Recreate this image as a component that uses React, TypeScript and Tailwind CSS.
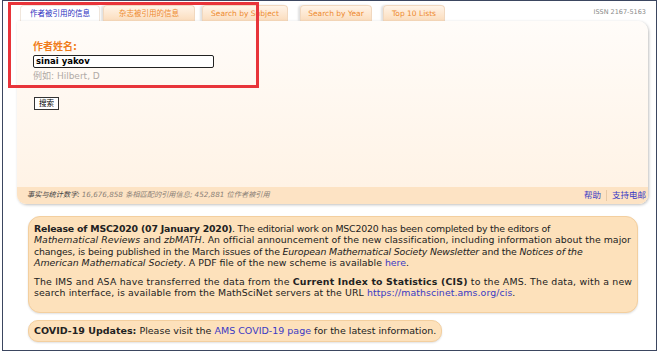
import React from 'react';

const tabs = [
  { label: '作者被引用的信息', w: 'w-[80px]', ml: 'ml-0', active: true },
  { label: '杂志被引用的信息', w: 'w-[92px]', ml: 'ml-[3px]', active: false },
  { label: 'Search by Subject', w: 'w-[86px]', ml: 'ml-[7px]', active: false },
  { label: 'Search by Year', w: 'w-[72px]', ml: 'ml-[12px]', active: false },
  { label: 'Top 10 Lists', w: 'w-[62px]', ml: 'ml-[11px]', active: false },
];

export default function App() {
  return (
    <div className="relative w-[659px] h-[353px] bg-white overflow-hidden font-['DejaVu_Sans','Noto_Sans_CJK_SC',sans-serif]">
      <div className="ml-[2px] w-[655px] h-[351px] border border-[#3b4660] flex flex-col">
        {/* Tabs */}
        <div className="h-[20px] flex items-end pl-[17px] pr-[10px]">
          {tabs.map((t) => (
            <div
              key={t.label}
              className={`${t.w} ${t.ml} h-[16px] rounded-t-[4px] flex items-center justify-center text-[7.5px] whitespace-nowrap ${
                t.active
                  ? 'bg-white text-[#2a2fc0] border border-b-0 border-[#f0e6dc]'
                  : 'bg-gradient-to-b from-[#fff4e8] to-[#fbdcbc] text-[#ee8a2e] border border-b-0 border-[#f1d8bf] shadow-[-2px_0_2px_rgba(0,0,0,0.12)]'
              }`}
            >
              {t.label}
            </div>
          ))}
          <div className="ml-auto self-start mt-[7px] text-[6.5px] text-[#8a8a8a]">ISSN 2167-5163</div>
        </div>

        {/* Main panel */}
        <div className="ml-[14px] w-[631px] h-[183px] rounded-tr-[10px] rounded-b-[9px] bg-gradient-to-b from-[#fffcf9] to-[#fff2e4] shadow-[1px_1px_3px_rgba(0,0,0,0.25)] flex flex-col overflow-hidden">
          <div className="pl-[16px] pt-[20px]">
            <div className="text-[10px] leading-[12px] font-semibold text-[#f07d1c]">作者姓名:</div>
            <div className="mt-[2px] w-[181px] h-[13px] border border-[#222] rounded-[2px] bg-white flex items-center pl-[2px] text-[8.5px] font-bold text-black">
              sinai yakov
            </div>
            <div className="mt-[3px] text-[9px] leading-[11px] text-[#b0aaa6]">例如: Hilbert, D</div>
            <button className="mt-[15px] ml-[1px] h-[13px] w-[25px] border border-[#333] bg-white text-[7.5px] leading-[10px] text-black flex items-center justify-center">
              搜索
            </button>
          </div>
          <div className="mt-auto h-[17px] bg-[#fde3c4] flex items-center pl-[10px] pr-[2px] italic text-[7.2px]">
            <span className="text-[#444]">事实与统计数字:</span>
            <span className="text-[#8a8077] ml-[2px]">16,676,858 条相匹配的引用信息; 452,881 位作者被引用</span>
            <span className="ml-auto not-italic text-[8.5px] text-[#3a3ac4]">帮助</span>
            <span className="mx-[5px] h-[11px] border-l border-[#e7c9a6]" />
            <span className="not-italic text-[8.5px] text-[#3a3ac4]">支持电邮</span>
          </div>
        </div>

        {/* Release box */}
        <div className="mt-[12px] ml-[25px] w-[610px] rounded-[12px] bg-[#fde1bb] border border-[#f3cf9f] shadow-[0_1px_2px_rgba(0,0,0,0.12)] pl-[5px] pr-[2px] pt-[6px] pb-[14px] text-[9.4px] leading-[11.4px] text-[#222] whitespace-nowrap">
          <p>
            <span className="tracking-[-0.2px]">
              <b>Release of MSC2020 (07 January 2020)</b>. The editorial work on MSC2020 has been completed by the editors of
            </span>
            <br />
            <span className="tracking-[0.03px]">
              <i>Mathematical Reviews</i> and <i>zbMATH</i>. An official announcement of the new classification, including information about the major
            </span>
            <br />
            <span className="tracking-[-0.16px]">
              changes, is being published in the March issues of the <i>European Mathematical Society Newsletter</i> and the <i>Notices of the</i>
            </span>
            <br />
            <i>American Mathematical Society</i>. A PDF file of the new scheme is available <span className="text-[#3a3ac4]">here</span>.
          </p>
          <p className="mt-[7px]">
            <span className="tracking-[0.18px]">
              The IMS and ASA have transferred the data from the <b>Current Index to Statistics (CIS)</b> to the AMS. The data, with a new
            </span>
            <br />
            <span className="tracking-[0.08px]">
              search interface, is available from the MathSciNet servers at the URL{' '}
              <span className="text-[#3a3ac4]">https://mathscinet.ams.org/cis</span>.
            </span>
          </p>
        </div>

        {/* COVID box */}
        <div className="mt-[7px] ml-[25px] self-start rounded-[10px] bg-[#fde1bb] border border-[#f3cf9f] shadow-[0_1px_2px_rgba(0,0,0,0.12)] px-[5px] h-[22px] flex items-center text-[9.5px] text-[#222] whitespace-nowrap">
          <span>
            <b>COVID-19 Updates:</b> Please visit the <span className="text-[#3a3ac4]">AMS COVID-19 page</span> for the latest information.
          </span>
        </div>
      </div>

      {/* Annotation rectangle */}
      <div className="absolute left-[8px] top-[2px] w-[251px] h-[86px] border-[3px] border-[#e8343a]" />
    </div>
  );
}
